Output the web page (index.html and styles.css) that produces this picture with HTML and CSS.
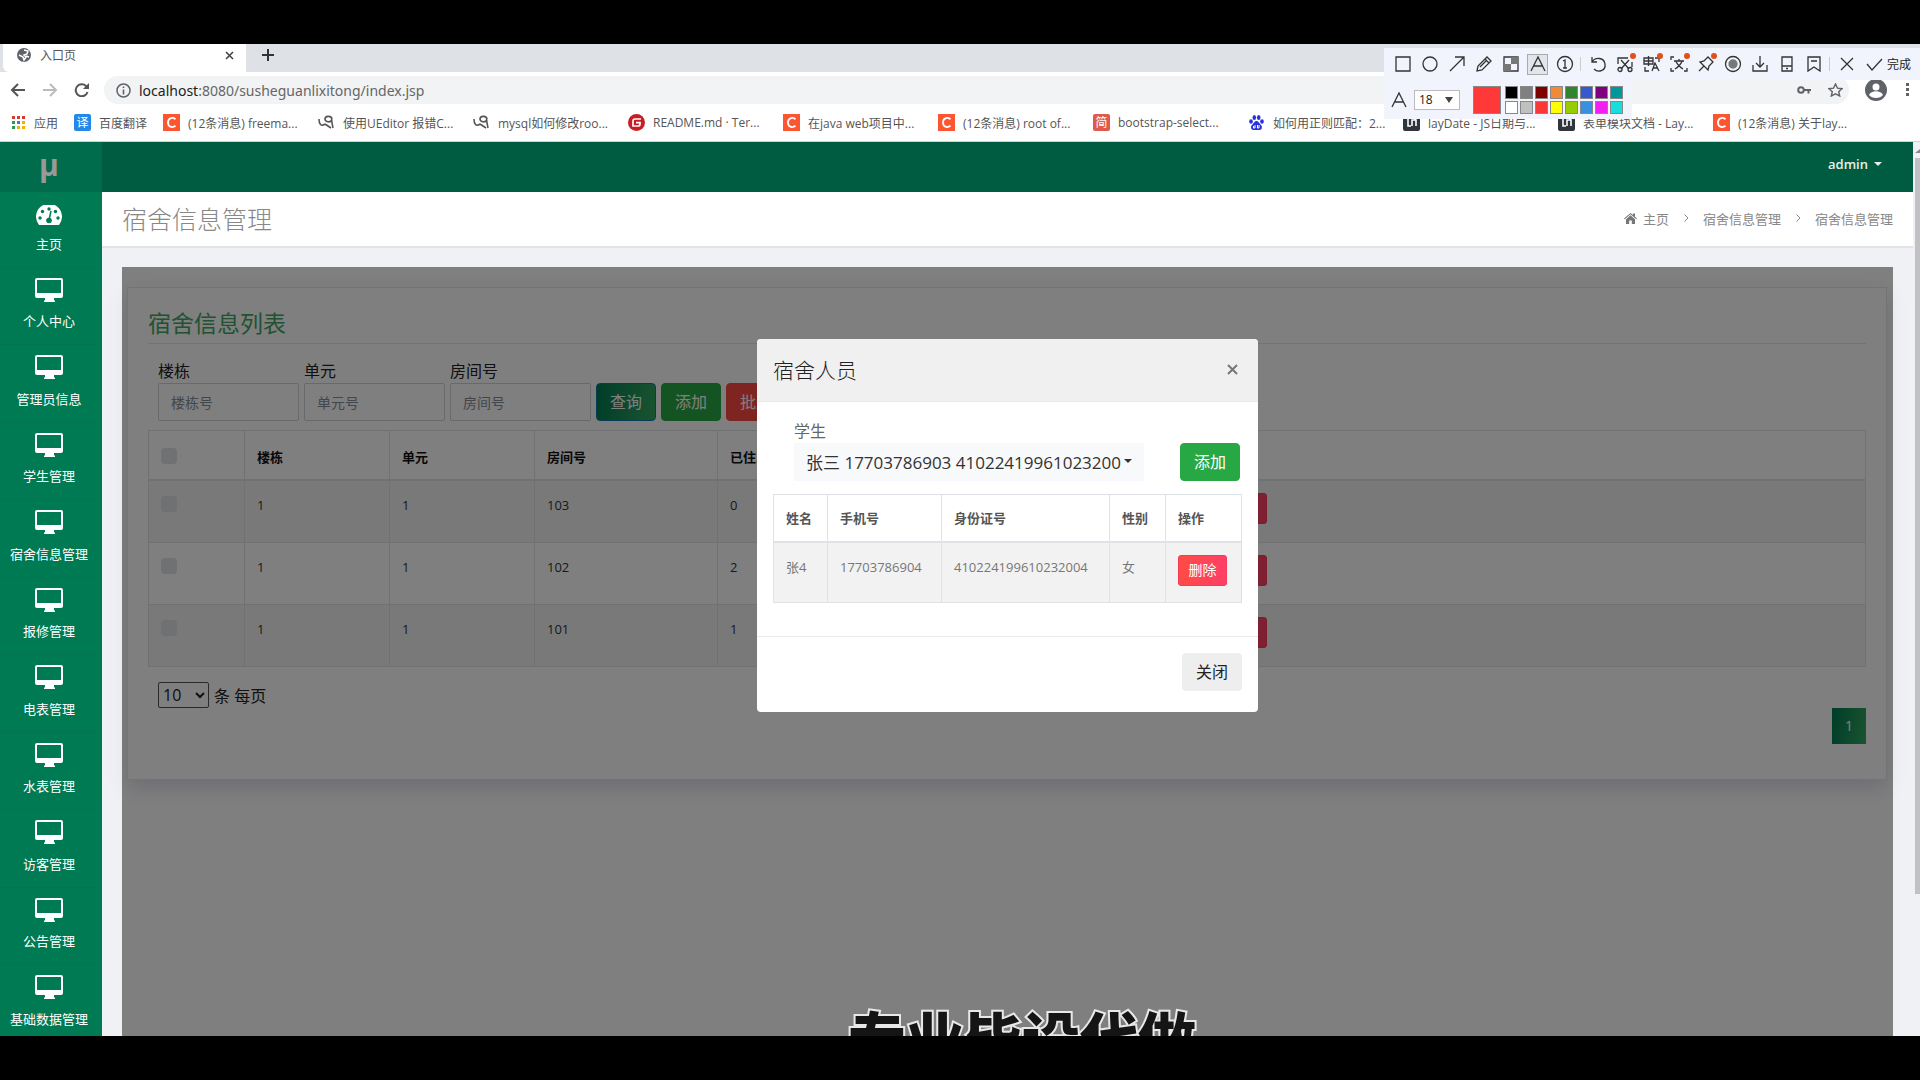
FILE: index.html
```html
<!DOCTYPE html>
<html lang="zh-CN">
<head>
<meta charset="utf-8">
<title>入口页</title>
<link rel="stylesheet" href="styles.css">
</head>
<body>
<svg class="defs" aria-hidden="true">
  <symbol id="monitor" viewBox="0 0 28 24"><path fill="#fff" fill-rule="evenodd" d="M2 0h24a2 2 0 0 1 2 2v16a2 2 0 0 1-2 2h-7v2l1 1v1H9v-1l1-1v-2H2a2 2 0 0 1-2-2V2a2 2 0 0 1 2-2zM2 2v13h24V2z"/></symbol>
  <symbol id="csdn" viewBox="0 0 17 17"><path fill="#fc5531" d="M0 0h17v17H0z"/><path d="M12.500 5.200C9 2.500 5 4.500 5 8.500s4 6 7.500 3.300" fill="none" stroke="#fff" stroke-width="1.800"/></symbol>
  <symbol id="ask" viewBox="0 0 17 17"><path d="M1 5c0 5 2 8 6 5M14 5c-1-4-7-3-7 0s5 4 7 1M13.500 3c0 4 .500 7 1.500 11M7 10l6 4" fill="none" stroke="#555" stroke-width="1.600"/></symbol>
  <symbol id="layui" viewBox="0 0 17 17"><rect width="17" height="17" rx="2" fill="#2f363c"/><path d="M5 4v8h3M9 12V6h4v6M12 3v3" fill="none" stroke="#fff" stroke-width="1.600"/></symbol>
</svg>
<div class="screen">
  <header class="browser">
    <div class="tabs">
      <div class="tab">
        <svg width="14" height="14" viewBox="0 0 14 14"><circle cx="7" cy="7" r="7" fill="#5f6368"/><path d="M7 2l4 1-1 3-3 1 2 2-2 3-1-3-4-2M9 8l3 1" fill="none" stroke="#fff" stroke-width="1.500"/></svg>
        <span class="tab-title">入口页</span>
        <svg width="9" height="9" viewBox="0 0 9 9"><path d="M1 1l7 7M8 1L1 8" stroke="#444" stroke-width="1.600"/></svg>
      </div>
      <svg class="plus" width="12" height="12" viewBox="0 0 12 12"><path d="M6 0v12M0 6h12" stroke="#333" stroke-width="2"/></svg>
    </div>
    <div class="address-row">
      <svg width="16" height="14" viewBox="0 0 16 14"><path d="M15 7H2M8 1L2 7l6 6" fill="none" stroke="#555" stroke-width="2"/></svg>
      <svg width="16" height="14" viewBox="0 0 16 14"><path d="M1 7h13M8 1l6 6-6 6" fill="none" stroke="#bbb" stroke-width="2"/></svg>
      <svg width="16" height="14" viewBox="0 0 16 14"><path d="M13.500 9A6 6 0 1 1 12 3l1.500 2" fill="none" stroke="#555" stroke-width="2"/><path d="M15 0v6H9z" fill="#555"/></svg>
      <div class="address">
        <svg width="15" height="15" viewBox="0 0 15 15"><circle cx="7.500" cy="7.500" r="6.500" fill="none" stroke="#5f6368" stroke-width="1.500"/><path d="M7.500 6.500v5M7.500 3.500V5" stroke="#5f6368" stroke-width="1.600"/></svg>
        <span class="url"><b>localhost</b>:8080/susheguanlixitong/index.jsp</span>
        <svg width="14" height="8" viewBox="0 0 14 8"><circle cx="4" cy="4" r="2.800" fill="none" stroke="#5f6368" stroke-width="2"/><path d="M7 4h7M11.500 4v3.500" stroke="#5f6368" stroke-width="2"/></svg>
        <svg width="15" height="14" viewBox="0 0 15 14"><path d="M7.500 1l2 4.200 4.500.500-3.300 3 1 4.300-4.200-2.200L3.300 13l1-4.300L1 5.700l4.500-.500z" fill="none" stroke="#5f6368" stroke-width="1.400"/></svg>
      </div>
      <div class="account">
        <svg width="22" height="22" viewBox="0 0 22 22"><circle cx="11" cy="11" r="11" fill="#5f6368"/><circle cx="11" cy="8" r="3.500" fill="#fff"/><path d="M4 16c2-5 12-5 14 0-3 4-11 4-14 0z" fill="#fff"/></svg>
        <svg width="4" height="14" viewBox="0 0 4 14"><path d="M0 0h3v3H0zM0 5h3v3H0zM0 10h3v3H0z" fill="#5f6368"/></svg>
      </div>
    </div>
    <nav class="bookmarks">
      <a href="#"><svg width="15" height="15" viewBox="0 0 15 15"><path fill="#d93a2f" d="M1 1h3v3H1zM6 1h3v3H6zM11 1h3v3h-3z"/><path fill="#2b9a4a" d="M1 6h3v3H1zM1 11h3v3H1z"/><path fill="#3b78e7" d="M6 6h3v3H6z"/><path fill="#f0b400" d="M11 6h3v3h-3zM6 11h3v3H6zM11 11h3v3h-3z"/></svg><span>应用</span></a>
      <a href="#"><i class="fav blue">译</i><span>百度翻译</span></a>
      <a href="#"><svg width="17" height="17"><use href="#csdn"/></svg><span>(12条消息) freema...</span></a>
      <a href="#"><svg width="17" height="17"><use href="#ask"/></svg><span>使用UEditor 报错C...</span></a>
      <a href="#"><svg width="17" height="17"><use href="#ask"/></svg><span>mysql如何修改roo...</span></a>
      <a href="#"><svg width="17" height="17" viewBox="0 0 17 17"><circle cx="8.500" cy="8.500" r="8.500" fill="#c71d23"/><path d="M13 5H7a2 2 0 0 0-2 2v5h5a2 2 0 0 0 2-2V8.700H8" fill="none" stroke="#fff" stroke-width="1.700"/></svg><span>README.md · Ter...</span></a>
      <a href="#"><svg width="17" height="17"><use href="#csdn"/></svg><span>在java web项目中...</span></a>
      <a href="#"><svg width="17" height="17"><use href="#csdn"/></svg><span>(12条消息) root of...</span></a>
      <a href="#"><i class="fav red">简</i><span>bootstrap-select...</span></a>
      <a href="#"><svg width="17" height="17" viewBox="0 0 17 17"><g fill="#2932e1"><ellipse cx="3" cy="7.500" rx="1.800" ry="2.300"/><ellipse cx="6.300" cy="3.500" rx="1.800" ry="2.500"/><ellipse cx="10.700" cy="3.500" rx="1.800" ry="2.500"/><ellipse cx="14" cy="7.500" rx="1.800" ry="2.300"/><path d="M8.500 7c2 0 2.500 2 4 3.500 2.500 2 1.500 5.500-1 5.500-1.500 0-4.500 0-6 0-2.500 0-3.500-3.500-1-5.500C6 9 6.500 7 8.500 7z"/></g><path d="M7 11v3H5.500v-2M9.500 11v3H11v-3" fill="none" stroke="#fff"/></svg><span>如何用正则匹配：2...</span></a>
      <a href="#"><svg width="17" height="17"><use href="#layui"/></svg><span>layDate - JS日期与...</span></a>
      <a href="#"><svg width="17" height="17"><use href="#layui"/></svg><span>表单模块文档 - Lay...</span></a>
      <a href="#"><svg width="17" height="17"><use href="#csdn"/></svg><span>(12条消息) 关于lay...</span></a>
    </nav>
  </header>

  <div class="app">
    <aside class="sidebar">
      <div class="logo">µ</div>
      <nav class="menu">
        <a href="#"><svg width="26" height="20" viewBox="0 0 26 20"><path d="M3 20a13 13 0 1 1 20 0z" fill="#fff"/><g fill="#007a52"><circle cx="13" cy="4" r="1.700"/><circle cx="6.500" cy="6.500" r="1.700"/><circle cx="19.500" cy="6.500" r="1.700"/><circle cx="4" cy="13" r="1.700"/><circle cx="22" cy="13" r="1.700"/><circle cx="13" cy="15.500" r="2.800"/></g><path d="M13 15l2-9" stroke="#007a52" stroke-width="1.500"/></svg><span>主页</span></a>
        <a href="#"><svg width="28" height="24"><use href="#monitor"/></svg><span>个人中心</span></a>
        <a href="#"><svg width="28" height="24"><use href="#monitor"/></svg><span>管理员信息</span></a>
        <a href="#"><svg width="28" height="24"><use href="#monitor"/></svg><span>学生管理</span></a>
        <a href="#"><svg width="28" height="24"><use href="#monitor"/></svg><span>宿舍信息管理</span></a>
        <a href="#"><svg width="28" height="24"><use href="#monitor"/></svg><span>报修管理</span></a>
        <a href="#"><svg width="28" height="24"><use href="#monitor"/></svg><span>电表管理</span></a>
        <a href="#"><svg width="28" height="24"><use href="#monitor"/></svg><span>水表管理</span></a>
        <a href="#"><svg width="28" height="24"><use href="#monitor"/></svg><span>访客管理</span></a>
        <a href="#"><svg width="28" height="24"><use href="#monitor"/></svg><span>公告管理</span></a>
        <a href="#"><svg width="28" height="24"><use href="#monitor"/></svg><span>基础数据管理</span></a>
      </nav>
    </aside>

    <div class="main">
      <div class="topbar"><button class="user" type="button">admin <span class="caret"></span></button></div>
      <div class="page-head">
        <h1>宿舍信息管理</h1>
        <nav class="crumbs">
          <svg width="13" height="11" viewBox="0 0 13 11"><path d="M6.500 0l2.500 2V.500h2v3.200L13 5.500l-.700.800-5.800-5-5.800 5L0 5.500z" fill="#777"/><path d="M6.500 2.300L11 6.200V11H7.800V7.500H5.200V11H2V6.200z" fill="#777"/></svg>
          <a href="#">主页</a>
          <svg class="sep" width="5" height="8" viewBox="0 0 5 8"><path d="M.500.500L4 4 .500 7.500" fill="none" stroke="#888"/></svg>
          <a href="#">宿舍信息管理</a>
          <svg class="sep" width="5" height="8" viewBox="0 0 5 8"><path d="M.500.500L4 4 .500 7.500" fill="none" stroke="#888"/></svg>
          <a href="#">宿舍信息管理</a>
        </nav>
      </div>

      <div class="content">
        <section class="card">
          <h2>宿舍信息列表</h2>
          <form class="search">
            <div class="field"><label for="building">楼栋</label><input id="building" type="text" placeholder="楼栋号"></div>
            <div class="field"><label for="unit">单元</label><input id="unit" type="text" placeholder="单元号"></div>
            <div class="field"><label for="room">房间号</label><input id="room" type="text" placeholder="房间号"></div>
            <button class="btn query" type="button">查询</button>
            <button class="btn add" type="button">添加</button>
            <button class="btn danger" type="button">批量删除</button>
          </form>
          <table class="grid rooms">
            <colgroup><col class="c-check"><col class="c-mid"><col class="c-mid"><col class="c-room"><col class="c-count"><col class="c-count"><col></colgroup>
            <thead><tr><th><input type="checkbox" aria-label="全选"></th><th>楼栋</th><th>单元</th><th>房间号</th><th>已住人数</th><th></th><th></th></tr></thead>
            <tbody>
              <tr><td><input type="checkbox" aria-label="103"></td><td>1</td><td>1</td><td>103</td><td>0</td><td></td><td><button class="small" type="button" aria-label="人员"></button><button class="small" type="button" aria-label="修改"></button><button class="small" type="button" aria-label="删除"></button></td></tr>
              <tr><td><input type="checkbox" aria-label="102"></td><td>1</td><td>1</td><td>102</td><td>2</td><td></td><td><button class="small" type="button" aria-label="人员"></button><button class="small" type="button" aria-label="修改"></button><button class="small" type="button" aria-label="删除"></button></td></tr>
              <tr><td><input type="checkbox" aria-label="101"></td><td>1</td><td>1</td><td>101</td><td>1</td><td></td><td><button class="small" type="button" aria-label="人员"></button><button class="small" type="button" aria-label="修改"></button><button class="small" type="button" aria-label="删除"></button></td></tr>
            </tbody>
          </table>
          <div class="page-size"><select id="size" aria-label="每页条数"><option>10</option></select><label for="size">条 每页</label></div>
          <div class="pager"><button type="button">1</button></div>
        </section>

        <div class="backdrop">
          <div class="modal" role="dialog" aria-labelledby="dlg">
            <div class="modal-head"><h3 id="dlg">宿舍人员</h3><button class="close" type="button" aria-label="关闭"><svg width="11" height="11" viewBox="0 0 11 11"><path d="M1 1l9 9M10 1l-9 9" stroke="#777" stroke-width="2"/></svg></button></div>
            <div class="modal-body">
              <div class="picker">
                <div class="student"><label for="student">学生</label><button id="student" class="dropdown" type="button"><span>张三 17703786903 410224199610232003</span><i class="caret"></i></button></div>
                <button class="btn add" type="button">添加</button>
              </div>
              <table class="grid people">
                <colgroup><col class="p-name"><col class="p-phone"><col class="p-id"><col class="p-sex"><col></colgroup>
                <thead><tr><th>姓名</th><th>手机号</th><th>身份证号</th><th>性别</th><th>操作</th></tr></thead>
                <tbody><tr><td>张4</td><td>17703786904</td><td>410224199610232004</td><td>女</td><td><button class="small" type="button">删除</button></td></tr></tbody>
              </table>
            </div>
            <div class="modal-foot"><button class="btn plain" type="button">关闭</button></div>
          </div>
        </div>
      </div>
    </div>

    <div class="scrollbar"><svg width="5" height="4" viewBox="0 0 5 4"><path d="M5 0v4H0z" fill="#888"/></svg><div class="thumb"></div></div>
  </div>

  <div class="caption">专业毕设代做</div>

  <div class="snip">
    <div class="tools">
      <button aria-label="矩形"><svg viewBox="0 0 18 18"><path d="M2 2h14v14H2z"/></svg></button>
      <button aria-label="椭圆"><svg viewBox="0 0 18 18"><circle cx="9" cy="9" r="7"/></svg></button>
      <button aria-label="箭头"><svg viewBox="0 0 18 18"><path d="M2 16L16 2M7 2h9v9"/></svg></button>
      <button aria-label="画笔"><svg viewBox="0 0 18 18"><path d="M2 16l1-5 9-9 4 4-9 9zM10 4l4 4M5 12l7-7"/></svg></button>
      <button aria-label="马赛克"><svg viewBox="0 0 18 18"><path d="M2 2h14v14H2z"/><path d="M9 2h7v7H9zM2 9h7v7H2z" fill="#777" stroke="none"/></svg></button>
      <button class="on" aria-label="文字"><svg viewBox="0 0 18 18"><path d="M2 16L9 2l7 14M4.500 11h9"/></svg></button>
      <button aria-label="序号"><svg viewBox="0 0 18 18"><circle cx="9" cy="9" r="7.500"/><path d="M7 6l2-1v8M7 13h4"/></svg></button>
      <i class="rule"></i>
      <button aria-label="撤销"><svg viewBox="0 0 18 18"><path d="M3 2v5h5M3 7c3-5 12-5 13 2s-7 9-11 5"/></svg></button>
      <button class="dot" aria-label="裁剪"><svg viewBox="0 0 18 18"><path d="M2 9V3h10M16 7v5M5 5l8 9M13 5l-8 9"/><circle cx="4" cy="14.500" r="2"/><circle cx="14" cy="14.500" r="2"/></svg></button>
      <button class="dot" aria-label="翻译"><svg viewBox="0 0 18 18"><path d="M1 3h9v6H1zM1 6h9M5.500 1v10M9 16l3-8 4 8M10 13h5M12 3h4v4M2 12v4h4"/></svg></button>
      <button class="dot" aria-label="识别"><svg viewBox="0 0 18 18"><path d="M1 5V2h3M1 13v3h3M17 13v3h-3M4 6h10M9 4v2M12 6c-1 4-4 6-7 8M6 6c1 4 4 6 7 8"/></svg></button>
      <button class="dot" aria-label="固定"><svg viewBox="0 0 18 18"><path d="M2 16l5-5M3 7l8 8 1-4 4-4-5-5-4 4zM11 2l5 5"/></svg></button>
      <button aria-label="录制"><svg viewBox="0 0 18 18"><circle cx="9" cy="9" r="7.500"/><circle cx="9" cy="9" r="4" fill="#777" stroke="#777"/></svg></button>
      <button aria-label="下载"><svg viewBox="0 0 18 18"><path d="M9 1v11M5 8l4 4 4-4M2 10v6h14v-6"/></svg></button>
      <button aria-label="手机"><svg viewBox="0 0 18 18"><path d="M4 2h10v14H4zM4 11h10M8 13.500h2"/></svg></button>
      <button aria-label="收藏"><svg viewBox="0 0 18 18"><path d="M3 2h12v14l-6-4-6 4zM6 6h6"/></svg></button>
      <i class="rule"></i>
      <button aria-label="取消"><svg viewBox="0 0 18 18"><path d="M3 3l12 12M15 3L3 15"/></svg></button>
      <button class="done"><svg viewBox="0 0 18 18"><path d="M2 9l5 6L17 4"/></svg>完成</button>
    </div>
    <div class="style-row">
      <svg class="letter" viewBox="0 0 18 18"><path d="M2 16L9 2l7 14M4.500 11h9"/></svg>
      <button class="font-size" type="button">18 <i></i></button>
      <span class="current"></span>
      <div class="palette">
        <i class="k1"></i><i class="k2"></i><i class="k3"></i><i class="k4"></i><i class="k5"></i><i class="k6"></i><i class="k7"></i><i class="k8"></i>
        <i class="k9"></i><i class="k10"></i><i class="k11"></i><i class="k12"></i><i class="k13"></i><i class="k14"></i><i class="k15"></i><i class="k16"></i>
      </div>
    </div>
  </div>
</div>
</body>
</html>
```
FILE: styles.css
```css
* { box-sizing: border-box; }
body { margin: 0; padding: 44px 0; background: #000; font-family: "Open Sans", "Noto Sans CJK SC", sans-serif; font-size: 13px; color: #666; }
button, input, select { font: inherit; margin: 0; }
button { cursor: pointer; }
a { color: inherit; text-decoration: none; }
h1, h2, h3 { margin: 0; font-weight: 300; }
i { font-style: normal; }
svg { flex: none; display: block; }
.defs { position: absolute; width: 0; height: 0; }
.screen { position: relative; display: flex; flex-direction: column; height: calc(100vh - 88px); overflow: hidden; background: #fff; }

/* browser chrome */
.browser { flex: none; height: 98px; border-bottom: 1px solid #c9d6d2; }
.tabs { display: flex; align-items: center; height: 28px; background: #dee1e6; padding-left: 3px; }
.tab { display: flex; align-items: center; gap: 9px; width: 243px; height: 28px; padding: 0 12px 6px 14px; background: #fff; border-bottom-left-radius: 6px; }
.tab-title { flex: 1; font-size: 12px; color: #555; }
.plus { margin: 0 0 6px 16px; }
.address-row { display: flex; align-items: center; gap: 16px; height: 36px; padding: 0 10px 0 10px; }
.address { flex: 1; display: flex; align-items: center; gap: 17px; height: 28px; margin-left: -2px; padding: 0 6px 0 12px; border-radius: 14px; background: #f1f3f4; }
.url { flex: 1; margin-left: -9px; font-family: "Noto Sans", sans-serif; font-size: 14px; color: #666; }
.url b { font-weight: 400; color: #222; }
.account { display: flex; align-items: center; gap: 19px; }
.bookmarks { display: grid; grid-template-columns: 63px 89px repeat(11, 155px); height: 29px; align-items: center; padding-left: 11px; }
.bookmarks a { display: flex; align-items: center; gap: 8px; white-space: nowrap; font-size: 12px; color: #555; }
.fav { width: 17px; height: 17px; border-radius: 2px; color: #fff; font-size: 12px; line-height: 17px; text-align: center; }
.blue { background: #2388e8; }
.red { background: #dd5a4c; }

/* application shell */
.app { flex: 1; min-height: 0; display: flex; background: #f0f1f5; }
.sidebar { flex: none; width: 102px; background: #007a52; overflow: hidden; }
.logo { height: 50px; padding-right: 4px; background: #006c4b; color: #999; font-size: 30px; font-weight: 700; line-height: 46px; text-align: center; }
.menu { display: grid; grid-template-rows: 76px; grid-auto-rows: 77px 78px; padding-right: 4px; }
.menu a { display: flex; flex-direction: column; align-items: center; justify-content: space-between; padding: 10px 0 13px; border-bottom: 1px solid #04744f; color: #fff; line-height: 20px; white-space: nowrap; }
.menu a:first-child { padding-top: 13px; }
.main { flex: 1; min-width: 0; display: flex; flex-direction: column; }
.topbar { flex: none; display: flex; justify-content: flex-end; height: 50px; padding: 0 25px 6px 0; background: #005c40; }
.user { display: flex; align-items: center; gap: 6px; border: 0; background: none; color: #e6f0ec; font-size: 13px; font-weight: 600; }
.caret { display: inline-block; flex: none; border: 4px solid transparent; border-top-color: currentColor; border-bottom: 0; }
.page-head { flex: none; display: flex; align-items: center; justify-content: space-between; height: 56px; padding: 0 20px 2px; background: #fff; border-bottom: 2px solid #e2e3e5; }
.page-head h1 { font-size: 25px; color: #888; }
.crumbs { display: flex; align-items: center; gap: 6px; color: #888; }
.crumbs .sep { margin: 0 8px 0 9px; }
.content { position: relative; flex: 1; min-height: 0; margin: 19px 20px 0; padding: 20px 6px 0 5px; background: #fff; }
.scrollbar { flex: none; width: 7px; padding: 7px 0 0 2px; background: #f1f1f3; }
.thumb { height: 83%; margin-top: 5px; background: #c1c1c5; }

/* room list */
.card { padding: 20px 20px 35px; border: 1px solid #e9e9ef; box-shadow: 0 8px 20px #dcdce8; }
.card h2 { height: 36px; padding-bottom: 5px; border-bottom: 1px solid #e6e6e6; color: #43a563; font-size: 23px; font-weight: 400; line-height: 30px; }
.search { display: flex; align-items: flex-end; gap: 5px; margin: 15px 0 9px; padding-left: 10px; }
.field { width: 141px; }
.field label, .student label { display: block; font-size: 16px; line-height: 24px; }
.field label { color: #222; }
.field input { display: block; width: 100%; height: 38px; padding: 0 12px; border: 1px solid #ced4da; border-radius: 2px; background: #fff; font-size: 14px; }
.field input::placeholder { color: #868e96; }
.btn { height: 38px; padding: 0 13px; border: 1px solid; border-radius: 4px; color: #fff; font-size: 16px; line-height: 24px; white-space: nowrap; }
.query { background: linear-gradient(100deg, #007a52, #34a860); border-color: #0a7ba8; }
.add { background: #28a745; border-color: #28a745; }
.danger { background: #ff4b43; border-color: #ff4b43; }
.plain { background: #eee; border-color: #eee; color: #222; }
.grid { width: 100%; table-layout: fixed; border-collapse: collapse; }
.grid th, .grid td { border: 1px solid #dee2e6; padding: 12px; text-align: left; vertical-align: top; line-height: 24px; white-space: nowrap; }
.grid th { height: 49px; border-bottom-width: 2px; font-weight: 700; padding-bottom: 10px; }
.grid td { height: 62px; }
.grid tbody tr { background: #f2f2f2; }
.rooms tbody tr:nth-child(2) { background: #fff; }
.rooms { color: #333; }
.rooms th { color: #111; padding-top: 14px; }
.c-check { width: 96px; }
.c-mid { width: 145px; }
.c-room { width: 183px; }
.c-count { width: 192px; }
.grid input { display: block; appearance: none; width: 16px; height: 16px; margin: 3px 0 0; border-radius: 4px; background: #dee2e6; }
.small { width: 49px; height: 31px; margin-right: 3px; padding: 0; border: 1px solid #f43b5c; border-radius: 3px; background: linear-gradient(90deg, #ff4b43, #ff3f68); color: #fff; font-size: 14px; line-height: 20px; vertical-align: top; }
.page-size { display: flex; align-items: center; gap: 5px; height: 26px; margin-top: 15px; padding-left: 10px; color: #222; font-size: 16px; }
.page-size select { width: 51px; height: 26px; border: 1px solid #555; border-radius: 2px; background: transparent; color: #222; }
.pager { display: flex; justify-content: flex-end; }
.pager button { width: 34px; height: 36px; border: 0; background: linear-gradient(100deg, #007a52, #34a860); color: #fff; font-size: 14px; }

/* dialog */
.backdrop { position: absolute; inset: 0; background: rgba(0, 0, 0, .5); }
.modal { width: 501px; margin: 72px auto 0; border-radius: 4px; background: #fff; overflow: hidden; }
.modal-head { display: flex; align-items: center; justify-content: space-between; height: 63px; padding: 0 20px 2px 16px; background: #f0f0f0; border-bottom: 1px solid #e6e8ea; }
.modal-head h3 { font-size: 21px; color: #222; }
.close { padding: 0; border: 0; background: none; }
.modal-body { padding: 17px 16px 33px; }
.picker { display: flex; align-items: flex-end; justify-content: space-between; margin-bottom: 13px; padding: 0 2px 0 21px; }
.dropdown { display: flex; align-items: center; gap: 3px; width: 350px; height: 38px; padding: 0 12px 2px; border: 0; background: #f8f9fa; color: #333; font-size: 17px; }
.dropdown span { flex: 1; overflow: hidden; white-space: nowrap; text-align: left; }
.people { color: #777; }
.people th { height: 47px; padding-top: 11px; color: #555; }
.people td { height: 61px; }
.p-name { width: 54px; }
.p-phone { width: 114px; }
.p-id { width: 168px; }
.p-sex { width: 56px; }
.modal-foot { display: flex; justify-content: flex-end; padding: 16px 16px 21px; border-top: 1px solid #e9ecef; }

/* video caption, cut off by the lower edge */
.caption { position: absolute; left: 0; right: 0; bottom: -32px; padding-left: 124px; text-align: center; color: #151515; font-family: "Noto Sans CJK SC", sans-serif; font-size: 58px; font-weight: 900; line-height: 64px; -webkit-text-stroke: 4px #e8e8e8; paint-order: stroke fill; }

/* screenshot tool */
.snip { position: absolute; top: 4px; right: 0; width: 536px; }
.tools { display: flex; align-items: center; height: 32px; padding-left: 5px; background: #f1f4fc; }
.tools button { position: relative; flex: none; display: flex; align-items: center; justify-content: center; width: 27px; height: 26px; padding: 0; border: 0; background: none; color: #222; }
.tools svg, .letter { width: 18px; height: 18px; fill: none; stroke: #333; stroke-width: 1.3; }
.tools .on { width: 21px; height: 21px; margin: 0 3px; background: #e2e5ec; border: 1px solid #aaa; }
.tools .dot::after { content: ""; position: absolute; top: 2px; right: 2px; width: 6px; height: 6px; border-radius: 50%; background: #e0501c; }
.rule { width: 1px; height: 14px; margin: 0 3px 0 2px; background: #ccc; }
.tools .done { width: auto; gap: 4px; margin-left: 5px; font-size: 12px; }
.style-row { display: flex; align-items: center; width: 248px; height: 39px; padding: 0 8px 0 6px; background: #f1f4fc; }
.font-size { display: flex; align-items: center; justify-content: space-between; width: 46px; height: 20px; margin: 0 13px 0 6px; padding: 0 6px 0 4px; border: 1px solid #bbb; background: #fff; color: #222; font-size: 12px; }
.font-size i { border: 4px solid transparent; border-top: 6px solid #444; border-bottom: 0; }
.current { width: 28px; height: 28px; margin-right: 4px; border: 1px solid #888; background: #ff3838; }
.palette { display: grid; grid-template-columns: repeat(8, 13px); gap: 2px; }
.palette i { height: 13px; border: 1px solid #888; }
.k1 { background: #000; } .k2 { background: #808080; } .k3 { background: #800000; } .k4 { background: #f18a38; }
.k5 { background: #308430; } .k6 { background: #3858d0; } .k7 { background: #800080; } .k8 { background: #009898; }
.k9 { background: #fff; } .k10 { background: #c0c0c0; } .k11 { background: #fb3838; } .k12 { background: #ff0; }
.k13 { background: #9c0; } .k14 { background: #3890e0; } .k15 { background: #f21ff2; } .k16 { background: #19dcdc; }
```
